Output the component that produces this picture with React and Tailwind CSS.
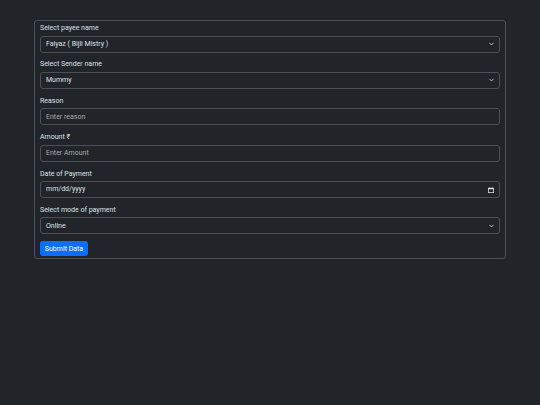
import React from "react";

const Chevron = () => (
  <svg
    className="pointer-events-none absolute right-[6px] top-1/2 -translate-y-1/2"
    width="5"
    height="5"
    viewBox="0 0 16 16"
    fill="none"
  >
    <path d="M2 5l6 6 6-6" stroke="#dee2e6" strokeWidth="2.5" strokeLinecap="round" strokeLinejoin="round" />
  </svg>
);

const Calendar = () => (
  <svg
    className="pointer-events-none absolute right-[6px] top-1/2 -translate-y-1/2"
    width="6"
    height="6"
    viewBox="0 0 16 16"
    fill="#dee2e6"
  >
    <path d="M3 1h2v1h6V1h2v1h1.5A1.5 1.5 0 0 1 16 3.5v11a1.5 1.5 0 0 1-1.5 1.5h-13A1.5 1.5 0 0 1 0 14.5v-11A1.5 1.5 0 0 1 1.5 2H3V1zm-1 5v8h12V6H2z" />
  </svg>
);

const boxCls =
  "block w-full h-[17px] rounded-[3px] border border-[#495057] bg-[#212529] pl-[5px] pr-[14px] text-[7px] text-[#dee2e6] outline-none appearance-none";

const Group = ({ label, children }) => (
  <div className="mb-[6.9px]">
    <div className="h-[10px] leading-[10px] mb-[2.5px] text-[7px] text-[#dee2e6]">{label}</div>
    <div className="relative">{children}</div>
  </div>
);

const SelectField = ({ label, value, options }) => (
  <Group label={label}>
    <select className={boxCls} defaultValue={value}>
      {options.map((o) => (
        <option key={o}>{o}</option>
      ))}
    </select>
    <Chevron />
  </Group>
);

const TextField = ({ label, placeholder }) => (
  <Group label={label}>
    <input
      className={`${boxCls} placeholder:text-[#a7aaad]`}
      placeholder={placeholder}
    />
  </Group>
);

export default function App() {
  return (
    <div
      className="min-h-[405px] w-full bg-[#212529] pt-[20px] pl-[34px]"
      style={{ fontFamily: "Roboto, 'Liberation Sans', sans-serif" }}
    >
      <div className="w-[472px] rounded-[3px] border border-[#4d5154] px-[5px] pt-[2px] pb-[1px]">
        <SelectField
          label="Select payee name"
          value="Faiyaz ( Bijli Mistry )"
          options={["Faiyaz ( Bijli Mistry )"]}
        />
        <SelectField label="Select Sender name" value="Mummy" options={["Mummy"]} />
        <TextField label="Reason" placeholder="Enter reason" />
        <TextField label="Amount ₹" placeholder="Enter Amount" />
        <Group label="Date of Payment">
          <div className={`${boxCls} flex items-center`}>mm/dd/yyyy</div>
          <Calendar />
        </Group>
        <SelectField label="Select mode of payment" value="Online" options={["Online", "Cash"]} />
        <button className="block h-[15px] w-[48px] rounded-[3px] bg-[#0d6efd] text-[7px] text-white mb-[1px]">
          Submit Data
        </button>
      </div>
    </div>
  );
}
